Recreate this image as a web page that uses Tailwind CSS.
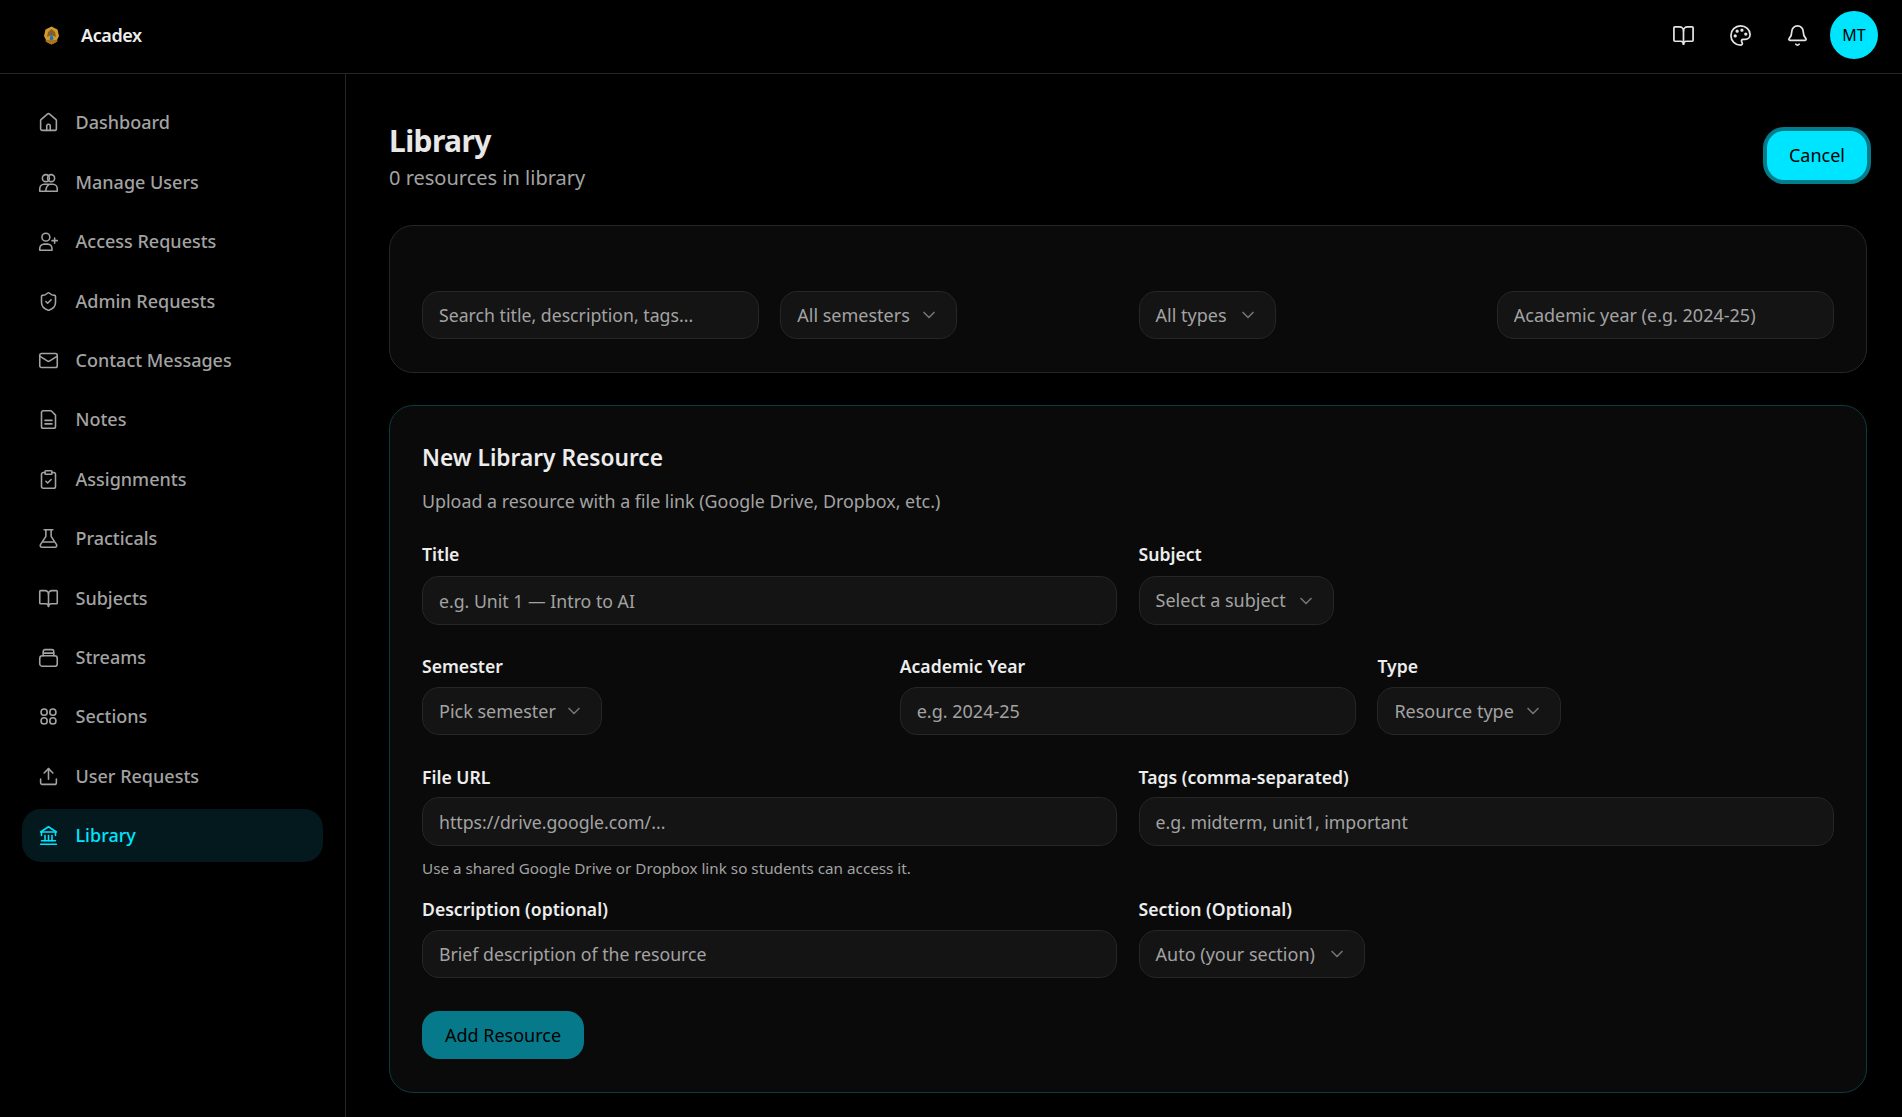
<!DOCTYPE html>
<html lang="en">
<head>
    <meta charset="UTF-8">
    <meta name="viewport" content="width=device-width, initial-scale=1.0">
    <title>Library</title>
    <script src="https://cdn.jsdelivr.net/npm/@tailwindcss/browser@4"></script>
</head>
<body class="bg-black text-[#e5e5e5] font-['Noto_Sans',sans-serif] h-[1117px] overflow-hidden">
    <!-- Top bar -->
    <header class="h-[74px] border-b border-[#262626] flex items-center pl-[44px] pr-[24px] pb-[3px]">
        <svg class="w-[15px] h-[19px]" viewBox="0 0 15 19">
            <path d="M7.5 0.5 13.5 3.500 15 10 12 16 7.500 18.500 3 16 0 10 1.500 3.500z" fill="#d19a2e"/>
            <path d="M7.5 3 11 6 12 11 7.500 9 3 11 4 6z" fill="#8a5f1a"/>
            <path d="M7.5 6 9.500 13 7.500 15 5.500 13z" fill="#2f6fb0"/>
            <path d="M1 15 3 14 12 14 14 15 11 17 7.500 18.500 4 17z" fill="#a8741f"/>
        </svg>
        <span class="ml-[22px] text-[18px] font-semibold tracking-[-0.4px] text-[#ededed]">Acadex</span>
        <div class="ml-auto flex items-center text-[#e5e5e5]">
            <svg class="w-[23px] h-[23px]" viewBox="0 0 24 24" fill="none" stroke="currentColor" stroke-width="1.800" stroke-linecap="round" stroke-linejoin="round"><path d="M12 7v14"/><path d="M3 18a1 1 0 0 1-1-1V4a1 1 0 0 1 1-1h5a4 4 0 0 1 4 4 4 4 0 0 1 4-4h5a1 1 0 0 1 1 1v13a1 1 0 0 1-1 1h-6a3 3 0 0 0-3 3 3 3 0 0 0-3-3z"/></svg>
            <svg class="w-[23px] h-[23px] ml-[34px]" viewBox="0 0 24 24" fill="none" stroke="currentColor" stroke-width="1.800" stroke-linecap="round" stroke-linejoin="round"><path d="M12 22a1 1 0 0 1 0-20 10 9 0 0 1 10 9 5 5 0 0 1-5 5h-2.250a1.750 1.750 0 0 0-1.400 2.800l.3.4a1.750 1.750 0 0 1-1.400 2.800z"/><circle cx="13.500" cy="6.500" r=".8" fill="currentColor"/><circle cx="17.500" cy="10.500" r=".8" fill="currentColor"/><circle cx="6.500" cy="12.500" r=".8" fill="currentColor"/><circle cx="8.500" cy="7.500" r=".8" fill="currentColor"/></svg>
            <svg class="w-[23px] h-[23px] ml-[34px]" viewBox="0 0 24 24" fill="none" stroke="currentColor" stroke-width="1.800" stroke-linecap="round" stroke-linejoin="round"><path d="M10.268 21a2 2 0 0 0 3.464 0"/><path d="M3.262 15.326A1 1 0 0 0 4 17h16a1 1 0 0 0 .74-1.673C19.410 13.956 18 12.499 18 8A6 6 0 0 0 6 8c0 4.499-1.411 5.956-2.738 7.326"/></svg>
            <div class="ml-[21px] w-[48px] h-[48px] rounded-full bg-[#00e5ff] text-black flex items-center justify-center text-[16px]">MT</div>
        </div>
    </header>

    <div class="flex h-[1043px]">
        <!-- Sidebar -->
        <aside class="w-[346px] shrink-0 border-r border-[#262626] px-[22px] pt-[22.5px] flex flex-col gap-[6.6px] text-[#a3a3a3] text-[18px] font-medium">
            <a class="h-[52.8px] rounded-[19px] px-[16px] flex items-center gap-[16.500px]">
                <svg class="w-[21px] h-[21px]" viewBox="0 0 24 24" fill="none" stroke="currentColor" stroke-width="1.800" stroke-linecap="round" stroke-linejoin="round"><path d="M10 21v-5a2 2 0 0 1 4 0v5"/><path d="M3 10a2 2 0 0 1 .709-1.528l7-5.999a2 2 0 0 1 2.582 0l7 5.999A2 2 0 0 1 21 10v9a2 2 0 0 1-2 2H5a2 2 0 0 1-2-2z"/></svg>
                Dashboard
            </a>
            <a class="h-[52.8px] rounded-[19px] px-[16px] flex items-center gap-[16.500px]">
                <svg class="w-[21px] h-[21px]" viewBox="0 0 24 24" fill="none" stroke="currentColor" stroke-width="1.800" stroke-linecap="round" stroke-linejoin="round"><circle cx="9" cy="7" r="4"/><circle cx="15" cy="7" r="4"/><path d="M2 22v-3a5 5 0 0 1 5-5h10a5 5 0 0 1 5 5v3z"/><path d="M12 15c-2 1-3 3-3 7"/></svg>
                Manage Users
            </a>
            <a class="h-[52.8px] rounded-[19px] px-[16px] flex items-center gap-[16.500px]">
                <svg class="w-[21px] h-[21px]" viewBox="0 0 24 24" fill="none" stroke="currentColor" stroke-width="1.800" stroke-linecap="round" stroke-linejoin="round"><circle cx="9" cy="7" r="4.500"/><path d="M2 22v-2a5 5 0 0 1 5-5h4a5 5 0 0 1 5 5v2z"/><path d="M19 8v6"/><path d="M22 11h-6"/></svg>
                Access Requests
            </a>
            <a class="h-[52.8px] rounded-[19px] px-[16px] flex items-center gap-[16.500px]">
                <svg class="w-[21px] h-[21px]" viewBox="0 0 24 24" fill="none" stroke="currentColor" stroke-width="1.800" stroke-linecap="round" stroke-linejoin="round"><path d="M20 13c0 5-3.500 7.500-7.660 8.950a1 1 0 0 1-.67-.01C7.500 20.500 4 18 4 13V6a1 1 0 0 1 1-1c2 0 4.500-1.200 6.240-2.720a1.170 1.170 0 0 1 1.520 0C14.510 3.810 17 5 19 5a1 1 0 0 1 1 1z"/><path d="m9 12 2 2 4-4"/></svg>
                Admin Requests
            </a>
            <a class="h-[52.8px] rounded-[19px] px-[16px] flex items-center gap-[16.500px]">
                <svg class="w-[21px] h-[21px]" viewBox="0 0 24 24" fill="none" stroke="currentColor" stroke-width="1.800" stroke-linecap="round" stroke-linejoin="round"><rect x="2" y="4" width="20" height="16" rx="2"/><path d="m22 7-8.970 5.700a1.940 1.940 0 0 1-2.060 0L2 7"/></svg>
                Contact Messages
            </a>
            <a class="h-[52.8px] rounded-[19px] px-[16px] flex items-center gap-[16.500px]">
                <svg class="w-[21px] h-[21px]" viewBox="0 0 24 24" fill="none" stroke="currentColor" stroke-width="1.800" stroke-linecap="round" stroke-linejoin="round"><path d="M15 2H6a2 2 0 0 0-2 2v16a2 2 0 0 0 2 2h12a2 2 0 0 0 2-2V7Z"/><path d="M16 13H8"/><path d="M16 17H8"/></svg>
                Notes
            </a>
            <a class="h-[52.8px] rounded-[19px] px-[16px] flex items-center gap-[16.500px]">
                <svg class="w-[21px] h-[21px]" viewBox="0 0 24 24" fill="none" stroke="currentColor" stroke-width="1.800" stroke-linecap="round" stroke-linejoin="round"><rect x="8" y="2" width="8" height="4" rx="1"/><path d="M16 4h2a2 2 0 0 1 2 2v14a2 2 0 0 1-2 2H6a2 2 0 0 1-2-2V6a2 2 0 0 1 2-2h2"/><path d="m9 14 2 2 4-4"/></svg>
                Assignments
            </a>
            <a class="h-[52.8px] rounded-[19px] px-[16px] flex items-center gap-[16.500px]">
                <svg class="w-[21px] h-[21px]" viewBox="0 0 24 24" fill="none" stroke="currentColor" stroke-width="1.800" stroke-linecap="round" stroke-linejoin="round"><path d="M9 2v7.500L2.800 19a2 2 0 0 0 1.700 3h15a2 2 0 0 0 1.700-3L15 9.500V2"/><path d="M7 2h10"/><path d="M6 16h12"/></svg>
                Practicals
            </a>
            <a class="h-[52.8px] rounded-[19px] px-[16px] flex items-center gap-[16.500px]">
                <svg class="w-[21px] h-[21px]" viewBox="0 0 24 24" fill="none" stroke="currentColor" stroke-width="1.800" stroke-linecap="round" stroke-linejoin="round"><path d="M12 7v14"/><path d="M3 18a1 1 0 0 1-1-1V4a1 1 0 0 1 1-1h5a4 4 0 0 1 4 4 4 4 0 0 1 4-4h5a1 1 0 0 1 1 1v13a1 1 0 0 1-1 1h-6a3 3 0 0 0-3 3 3 3 0 0 0-3-3z"/></svg>
                Subjects
            </a>
            <a class="h-[52.8px] rounded-[19px] px-[16px] flex items-center gap-[16.500px]">
                <svg class="w-[21px] h-[21px]" viewBox="0 0 24 24" fill="none" stroke="currentColor" stroke-width="1.800" stroke-linecap="round" stroke-linejoin="round"><rect x="2" y="10" width="20" height="12" rx="3"/><path d="M6 10V5a2 2 0 0 1 2-2h8a2 2 0 0 1 2 2v5"/><path d="M6 7h12"/></svg>
                Streams
            </a>
            <a class="h-[52.8px] rounded-[19px] px-[16px] flex items-center gap-[16.500px]">
                <svg class="w-[21px] h-[21px]" viewBox="0 0 24 24" fill="none" stroke="currentColor" stroke-width="1.800" stroke-linecap="round" stroke-linejoin="round"><circle cx="7" cy="7" r="3.500"/><circle cx="17" cy="7" r="3.500"/><circle cx="7" cy="17" r="3.500"/><circle cx="17" cy="17" r="3.500"/></svg>
                Sections
            </a>
            <a class="h-[52.8px] rounded-[19px] px-[16px] flex items-center gap-[16.500px]">
                <svg class="w-[21px] h-[21px]" viewBox="0 0 24 24" fill="none" stroke="currentColor" stroke-width="1.800" stroke-linecap="round" stroke-linejoin="round"><path d="M21 15v4a2 2 0 0 1-2 2H5a2 2 0 0 1-2-2v-4"/><path d="M17 8l-5-5-5 5"/><path d="M12 3v12"/></svg>
                User Requests
            </a>
            <a class="h-[52.8px] rounded-[19px] px-[16px] flex items-center gap-[16.500px] bg-[#03191d] text-[#00e5ff]">
                <svg class="w-[21px] h-[21px]" viewBox="0 0 24 24" fill="none" stroke="currentColor" stroke-width="1.800" stroke-linecap="round" stroke-linejoin="round"><path d="M3 22h18"/><path d="M8 18v-6"/><path d="M12 18v-6"/><path d="M16 18v-6"/><path d="M4 18h16"/><path d="M4 12V8h16v4"/><path d="M3 8l9-6 9 6"/></svg>
                Library
            </a>
        </aside>

        <!-- Main -->
        <main class="flex-1 pl-[43px] pr-[35px] pt-[43px]">
            <div class="flex justify-between items-start h-[108px]">
                <div class="pt-[4px]">
                    <h1 class="text-[30px] leading-[40px] font-bold tracking-[-0.6px] text-[#e8e8e8]">Library</h1>
                    <p class="text-[20px] leading-[32px] text-[#a3a3a3] mt-[1px]">0 resources in library</p>
                </div>
                <button class="mt-[14px] w-[100px] h-[49px] rounded-[17px] bg-[#00e5ff] text-black text-[18px] ring-[4px] ring-[#037c8c]">Cancel</button>
            </div>

            <!-- Filters -->
            <section class="h-[148px] rounded-[24px] border border-[#262626] bg-[#0a0a0a] pl-[32px] pr-[32.5px] pt-[65px] grid grid-cols-4 gap-[21.6px] items-start text-[18px] text-[#a3a3a3]">
                <input class="h-[48px] w-full rounded-[17px] border border-[#262626] bg-[#141414] px-[16px] text-[17.7px] placeholder:text-[#a3a3a3]" placeholder="Search title, description, tags...">
                <button class="justify-self-start h-[48px] w-[177px] rounded-[17px] border border-[#262626] bg-[#141414] pl-[16px] pr-[17px] flex items-center justify-between">All semesters
                    <svg class="w-[20px] h-[20px] text-[#737373]" viewBox="0 0 24 24" fill="none" stroke="currentColor" stroke-width="2" stroke-linecap="round" stroke-linejoin="round"><path d="m6 9 6 6 6-6"/></svg>
                </button>
                <button class="justify-self-start h-[48px] w-[137px] rounded-[17px] border border-[#262626] bg-[#141414] pl-[16px] pr-[17px] flex items-center justify-between">All types
                    <svg class="w-[20px] h-[20px] text-[#737373]" viewBox="0 0 24 24" fill="none" stroke="currentColor" stroke-width="2" stroke-linecap="round" stroke-linejoin="round"><path d="m6 9 6 6 6-6"/></svg>
                </button>
                <input class="h-[48px] w-full rounded-[17px] border border-[#262626] bg-[#141414] px-[16px] placeholder:text-[#a3a3a3]" placeholder="Academic year (e.g. 2024-25)">
            </section>

            <!-- Form -->
            <section class="mt-[32px] h-[688px] rounded-[24px] border border-[#0b3a41] bg-[#0a0a0a] pl-[32px] pr-[32.5px] pt-[34px] text-[18px] text-[#a3a3a3]">
                <h2 class="text-[22.7px] leading-[36px] font-semibold text-[#ededed]">New Library Resource</h2>
                <p class="mt-[7px] leading-[36px] text-[17.85px]">Upload a resource with a file link (Google Drive, Dropbox, etc.)</p>

                <div class="mt-[23px] grid grid-cols-2 gap-[21.6px]">
                    <div>
                        <label class="block leading-[24px] mb-[10px] text-[17.6px] font-semibold text-[#ededed]">Title</label>
                        <input class="h-[49px] w-full rounded-[17px] border border-[#262626] bg-[#141414] px-[16px] text-[17.7px] placeholder:text-[#a3a3a3]" placeholder="e.g. Unit 1 — Intro to AI">
                    </div>
                    <div>
                        <label class="block leading-[24px] mb-[10px] text-[17.6px] font-semibold text-[#ededed]">Subject</label>
                        <button class="h-[49px] w-[195px] rounded-[17px] border border-[#262626] bg-[#141414] pl-[16px] pr-[17px] flex items-center justify-between">Select a subject
                            <svg class="w-[20px] h-[20px] text-[#737373]" viewBox="0 0 24 24" fill="none" stroke="currentColor" stroke-width="2" stroke-linecap="round" stroke-linejoin="round"><path d="m6 9 6 6 6-6"/></svg>
                        </button>
                    </div>
                </div>

                <div class="mt-[29px] grid grid-cols-3 gap-[21.6px]">
                    <div>
                        <label class="block leading-[24px] mb-[9px] text-[17.6px] font-semibold text-[#ededed]">Semester</label>
                        <button class="h-[48px] w-[180px] rounded-[17px] border border-[#262626] bg-[#141414] pl-[16px] pr-[17px] flex items-center justify-between">Pick semester
                            <svg class="w-[20px] h-[20px] text-[#737373]" viewBox="0 0 24 24" fill="none" stroke="currentColor" stroke-width="2" stroke-linecap="round" stroke-linejoin="round"><path d="m6 9 6 6 6-6"/></svg>
                        </button>
                    </div>
                    <div>
                        <label class="block leading-[24px] mb-[9px] text-[17.6px] font-semibold text-[#ededed]">Academic Year</label>
                        <input class="h-[48px] w-full rounded-[17px] border border-[#262626] bg-[#141414] px-[16px] placeholder:text-[#a3a3a3]" placeholder="e.g. 2024-25">
                    </div>
                    <div>
                        <label class="block leading-[24px] mb-[9px] text-[17.6px] font-semibold text-[#ededed]">Type</label>
                        <button class="h-[48px] w-[184px] rounded-[17px] border border-[#262626] bg-[#141414] pl-[16px] pr-[17px] flex items-center justify-between">Resource type
                            <svg class="w-[20px] h-[20px] text-[#737373]" viewBox="0 0 24 24" fill="none" stroke="currentColor" stroke-width="2" stroke-linecap="round" stroke-linejoin="round"><path d="m6 9 6 6 6-6"/></svg>
                        </button>
                    </div>
                </div>

                <div class="mt-[30px] grid grid-cols-2 gap-[21.6px]">
                    <div>
                        <label class="block leading-[24px] mb-[8px] text-[17.6px] font-semibold text-[#ededed]">File URL</label>
                        <input class="h-[49px] w-full rounded-[17px] border border-[#262626] bg-[#141414] px-[16px] text-[17.7px] placeholder:text-[#a3a3a3]" placeholder="https://drive.google.com/...">
                        <p class="mt-[10px] text-[15.25px] leading-[24px]">Use a shared Google Drive or Dropbox link so students can access it.</p>
                    </div>
                    <div>
                        <label class="block leading-[24px] mb-[8px] text-[17.6px] font-semibold text-[#ededed]">Tags (comma-separated)</label>
                        <input class="h-[49px] w-full rounded-[17px] border border-[#262626] bg-[#141414] px-[16px] text-[17.7px] placeholder:text-[#a3a3a3]" placeholder="e.g. midterm, unit1, important">
                    </div>
                </div>

                <div class="mt-[17px] grid grid-cols-2 gap-[21.6px]">
                    <div>
                        <label class="block leading-[24px] mb-[9px] text-[17.6px] font-semibold text-[#ededed]">Description (optional)</label>
                        <input class="h-[48px] w-full rounded-[17px] border border-[#262626] bg-[#141414] px-[16px] text-[17.7px] placeholder:text-[#a3a3a3]" placeholder="Brief description of the resource">
                    </div>
                    <div>
                        <label class="block leading-[24px] mb-[9px] text-[17.6px] font-semibold text-[#ededed]">Section (Optional)</label>
                        <button class="h-[48px] w-[226px] rounded-[17px] border border-[#262626] bg-[#141414] pl-[16px] pr-[17px] flex items-center justify-between">Auto (your section)
                            <svg class="w-[20px] h-[20px] text-[#737373]" viewBox="0 0 24 24" fill="none" stroke="currentColor" stroke-width="2" stroke-linecap="round" stroke-linejoin="round"><path d="m6 9 6 6 6-6"/></svg>
                        </button>
                    </div>
                </div>

                <button class="mt-[33px] w-[162px] h-[48px] rounded-[17px] bg-[#067a8a] text-black">Add Resource</button>
            </section>
        </main>
    </div>
</body>
</html>
